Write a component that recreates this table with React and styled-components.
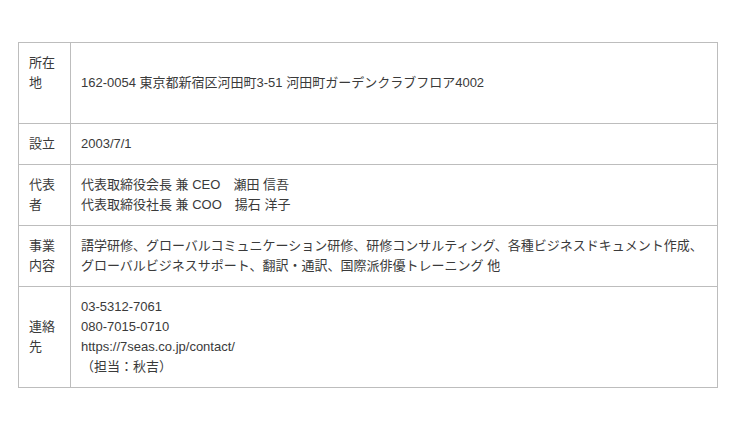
import styled, { createGlobalStyle } from "styled-components";

const GlobalStyle = createGlobalStyle`
  body {
    margin: 0;
    background: #fff;
    font-family: "Liberation Sans", "Noto Sans CJK JP", sans-serif;
  }
`;

const Page = styled.div`
  padding: 42px 22px 0 18px;
`;

const Table = styled.table`
  width: 700px;
  border-collapse: collapse;
  font-size: 13px;
  line-height: 20px;
  color: #3a3a3a;
`;

const Label = styled.th`
  width: 31px;
  padding: 10px;
  border: 1px solid #bdbdbd;
  font-weight: normal;
  text-align: left;
  vertical-align: ${(p) => p.$align || "middle"};
`;

const Value = styled.td`
  padding: ${(p) => p.$pad || 10}px 10px;
  border: 1px solid #bdbdbd;
  vertical-align: middle;
`;

const Line = styled.div`
  white-space: nowrap;
`;

const rows = [
  { label: "所在地", lines: ["162-0054 東京都新宿区河田町3-51 河田町ガーデンクラブフロア4002"], align: "top", pad: 30 },
  { label: "設立", lines: ["2003/7/1"] },
  { label: "代表者", lines: ["代表取締役会長 兼 CEO　瀬田 信吾", "代表取締役社長 兼 COO　揚石 洋子"] },
  {
    label: "事業内容",
    lines: [
      "語学研修、グローバルコミュニケーション研修、研修コンサルティング、各種ビジネスドキュメント作成、",
      "グローバルビジネスサポート、翻訳・通訳、国際派俳優トレーニング 他",
    ],
  },
  { label: "連絡先", lines: ["03-5312-7061", "080-7015-0710", "https://7seas.co.jp/contact/", "（担当：秋吉）"] },
];

const App = () => {
  return (
    <Page>
      <GlobalStyle />
      <Table>
        <tbody>
          {rows.map((row) => (
            <tr key={row.label}>
              <Label $align={row.align}>{row.label}</Label>
              <Value $pad={row.pad}>
                {row.lines.map((line) => (
                  <Line key={line}>{line}</Line>
                ))}
              </Value>
            </tr>
          ))}
        </tbody>
      </Table>
    </Page>
  );
};

export default App;
